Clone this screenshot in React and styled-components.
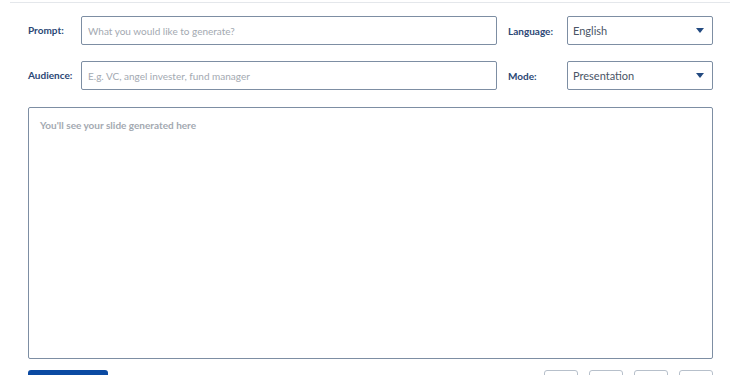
import React from 'react';
import styled, { createGlobalStyle } from 'styled-components';

const GlobalStyle = createGlobalStyle`
    body {
        margin: 0;
        background: #ffffff;
        font-family: Lato, "Open Sans", sans-serif;
    }
`;

const Page = styled.div`
    width: 750px;
    height: 375px;
    overflow: hidden;
`;

const Divider = styled.div`
    margin: 2px 20px 0 10px;
    height: 1px;
    background: #e4e7eb;
`;

const Form = styled.div`
    padding: 13px 37px 0 28px;
    display: flex;
    flex-direction: column;
`;

const Row = styled.div`
    display: flex;
    align-items: center;
    height: 29px;
    margin-bottom: ${props => props.gap || 0}px;
`;

const Label = styled.label`
    width: ${props => props.width}px;
    flex-shrink: 0;
    font-size: 10px;
    font-weight: 700;
    color: #2b4775;
    margin-left: ${props => props.offset || 0}px;
    margin-top: ${props => props.lift || 0}px;
`;

const TextInput = styled.input`
    box-sizing: border-box;
    width: 416px;
    height: 29px;
    border: 1px solid #7d8ea3;
    border-radius: 2px;
    padding: 0 6px;
    font-family: Lato, sans-serif;
    font-size: 10px;
    color: #333;
    outline: none;
    &::placeholder {
        color: #a3a9b1;
    }
`;

const Select = styled.div`
    box-sizing: border-box;
    width: 146px;
    height: 29px;
    border: 1px solid #7d8ea3;
    border-radius: 2px;
    padding: 0 8px 0 5px;
    display: flex;
    align-items: center;
    justify-content: space-between;
    font-size: 11px;
    color: #4a5566;
`;

const Caret = styled.span`
    width: 0;
    height: 0;
    border-left: 4.5px solid transparent;
    border-right: 4.5px solid transparent;
    border-top: 5px solid #234a80;
`;

const Output = styled.div`
    box-sizing: border-box;
    height: 252px;
    border: 1px solid #7d8ea3;
    border-radius: 2px;
    padding: 11px 11px;
    font-size: 10px;
    font-weight: 700;
    color: #a3a9b1;
`;

const Footer = styled.div`
    display: flex;
    justify-content: space-between;
    margin-top: 11px;
`;

const Generate = styled.button`
    width: 80px;
    height: 30px;
    border: none;
    border-radius: 3px;
    background: #0b4aa2;
`;

const Tools = styled.div`
    display: flex;
    gap: 11px;
`;

const Tool = styled.button`
    box-sizing: border-box;
    width: 34px;
    height: 30px;
    border: 1px solid #b7c0cb;
    border-radius: 3px;
    background: #ffffff;
`;

const FieldSelect = ({ value }) => (
    <Select>
        <span>{value}</span>
        <Caret />
    </Select>
);

const App = () => (
    <Page>
        <GlobalStyle />
        <Divider />
        <Form>
            <Row gap={16}>
                <Label width={53} lift={-2}>Prompt:</Label>
                <TextInput placeholder="What you would like to generate?" />
                <Label width={59} offset={11}>Language:</Label>
                <FieldSelect value="English" />
            </Row>
            <Row gap={17}>
                <Label width={53} lift={-2}>Audience:</Label>
                <TextInput placeholder="E.g. VC, angel invester, fund manager" />
                <Label width={59} offset={11}>Mode:</Label>
                <FieldSelect value="Presentation" />
            </Row>
            <Output>You'll see your slide generated here</Output>
            <Footer>
                <Generate />
                <Tools>
                    <Tool />
                    <Tool />
                    <Tool />
                    <Tool />
                </Tools>
            </Footer>
        </Form>
    </Page>
);

export default App;
